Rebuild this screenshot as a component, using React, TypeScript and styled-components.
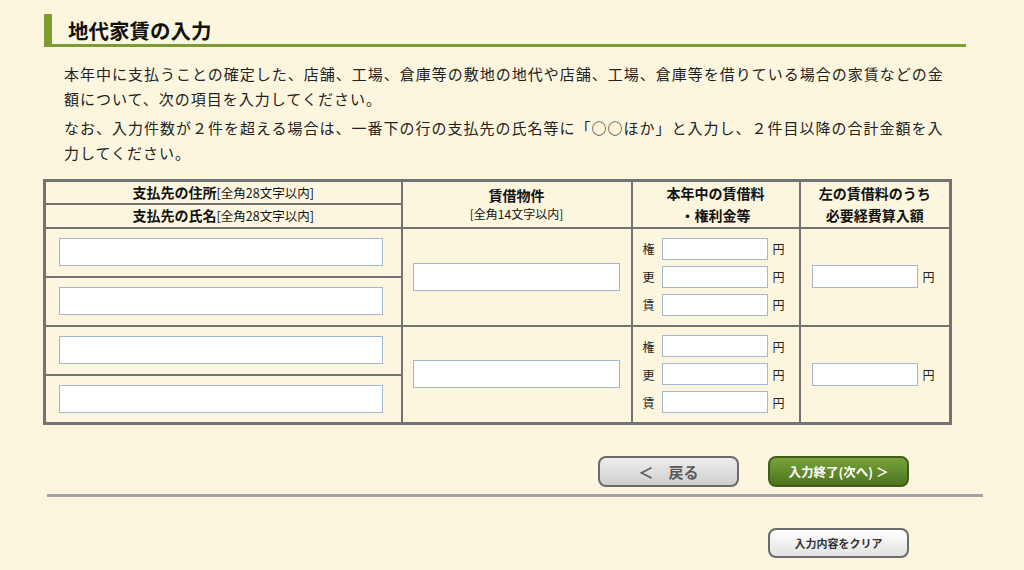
import styled, { createGlobalStyle } from "styled-components";

const GlobalStyle = createGlobalStyle`
  html, body {
    margin: 0;
    padding: 0;
    background: #fdf6df;
  }
  body {
    font-family: "Noto Sans CJK JP", "Noto Sans", sans-serif;
    color: #222;
  }
`;

const entries = [0, 1];
const kinds = ["権", "更", "賃"];

const App = function App(): JSX.Element {
  return (
    <>
      <GlobalStyle />
      <Page>
        <Heading>地代家賃の入力</Heading>
        <Lead>
          <p>
            本年中に支払うことの確定した、店舗、工場、倉庫等の敷地の地代や店舗、工場、倉庫等を借りている場合の家賃などの金額について、次の項目を入力してください。
          </p>
          <p>
            なお、入力件数が２件を超える場合は、一番下の行の支払先の氏名等に「○○ほか」と入力し、２件目以降の合計金額を入力してください。
          </p>
        </Lead>
        <Table>
          <colgroup>
            <col style={{ width: 357 }} />
            <col style={{ width: 230 }} />
            <col style={{ width: 168 }} />
            <col style={{ width: 151 }} />
          </colgroup>
          <thead>
            <HeadRow $h={23}>
              <Th>
                支払先の住所<Note>[全角28文字以内]</Note>
              </Th>
              <Th rowSpan={2}>
                賃借物件
                <SubNote>[全角14文字以内]</SubNote>
              </Th>
              <Th rowSpan={2} $tall>
                本年中の賃借料
                <br />
                ・権利金等
              </Th>
              <Th rowSpan={2} $tall>
                左の賃借料のうち
                <br />
                必要経費算入額
              </Th>
            </HeadRow>
            <HeadRow $h={24}>
              <Th>
                支払先の氏名<Note>[全角28文字以内]</Note>
              </Th>
            </HeadRow>
          </thead>
          <tbody>
            {entries.map((i) => [
              <BodyRow key={`a${i}`}>
                <Td>
                  <NameInput type="text" />
                </Td>
                <Td rowSpan={2} $center>
                  <PropertyInput type="text" />
                </Td>
                <Td rowSpan={2}>
                  <AmountList>
                    {kinds.map((k) => (
                      <AmountLine key={k}>
                        <Kind>{k}</Kind>
                        <SmallInput type="text" />
                        <Yen>円</Yen>
                      </AmountLine>
                    ))}
                  </AmountList>
                </Td>
                <Td rowSpan={2}>
                  <ExpenseLine>
                    <SmallInput type="text" />
                    <Yen>円</Yen>
                  </ExpenseLine>
                </Td>
              </BodyRow>,
              <BodyRow key={`b${i}`}>
                <Td>
                  <NameInput type="text" />
                </Td>
              </BodyRow>,
            ])}
          </tbody>
        </Table>
        <ButtonRow>
          <BackButton type="button">＜　戻る</BackButton>
          <NextButton type="button">入力終了(次へ) ＞</NextButton>
        </ButtonRow>
        <Divider />
        <ClearRow>
          <ClearButton type="button">入力内容をクリア</ClearButton>
        </ClearRow>
      </Page>
    </>
  );
};

const Page = styled.div`
  width: 1024px;
  height: 570px;
  padding: 14px 0 0 44px;
  box-sizing: border-box;
  overflow: hidden;
`;

const Heading = styled.h1`
  margin: 0;
  width: 922px;
  height: 33px;
  box-sizing: border-box;
  border-left: 8px solid #7d9c33;
  border-bottom: 3px solid #7d9c33;
  padding-left: 16px;
  font-size: 20.5px;
  font-weight: bold;
  line-height: 32px;
  color: #111;
`;

const Lead = styled.div`
  width: 890px;
  margin: 14px 0 0 20px;
  font-size: 15px;
  letter-spacing: 1px;
  line-height: 25px;
  color: #222;

  p {
    margin: 0 0 4px;
  }
`;

const Table = styled.table`
  margin: 14px 0 0 -1px;
  width: 907px;
  table-layout: fixed;
  border-collapse: collapse;
  border: 3px solid #737373;
`;

const HeadRow = styled.tr<{ $h: number }>`
  height: ${(p) => p.$h}px;
`;

const Th = styled.th<{ $tall?: boolean }>`
  border: 2px solid #737373;
  padding: 0;
  font-size: 14px;
  font-weight: bold;
  line-height: ${(p) => (p.$tall ? 22 : 18)}px;
  text-align: center;
  vertical-align: middle;
  color: #111;
`;

const Note = styled.span`
  font-size: 12.5px;
  font-weight: normal;
`;

const SubNote = styled.span`
  display: block;
  font-size: 12px;
  font-weight: normal;
  line-height: 18px;
  margin-top: 1px;
`;

const BodyRow = styled.tr`
  height: 49px;
`;

const Td = styled.td<{ $center?: boolean }>`
  border: 2px solid #737373;
  padding: 0 10px;
  vertical-align: middle;
  text-align: ${(p) => (p.$center ? "center" : "left")};
`;

const BaseInput = styled.input`
  box-sizing: border-box;
  border: 1px solid #a3b6d8;
  background: #fff;
  border-radius: 0;
  padding: 0 4px;
  margin: 0;
  font-size: 13px;
  outline: none;
`;

const NameInput = styled(BaseInput)`
  display: block;
  width: 324px;
  height: 28px;
  margin-left: 3px;
`;

const PropertyInput = styled(BaseInput)`
  display: block;
  width: 207px;
  height: 28px;
`;

const SmallInput = styled(BaseInput)`
  width: 106px;
  height: 22px;
`;

const AmountList = styled.div`
  display: flex;
  flex-direction: column;
  gap: 6px;
`;

const AmountLine = styled.div`
  display: flex;
  align-items: center;
`;

const Kind = styled.span`
  width: 19px;
  font-size: 12px;
  color: #222;
`;

const Yen = styled.span`
  margin-left: 5px;
  font-size: 12px;
  color: #222;
`;

const ExpenseLine = styled.div`
  display: flex;
  align-items: center;
  padding-left: 1px;

  ${SmallInput} {
    height: 23px;
  }
`;

const ButtonRow = styled.div`
  display: flex;
  justify-content: flex-end;
  gap: 29px;
  width: 865px;
  margin-top: 31px;
`;

const ButtonBase = styled.button`
  width: 141px;
  height: 31px;
  border-radius: 8px;
  font-family: "Noto Sans CJK JP", sans-serif;
  font-weight: bold;
  cursor: pointer;
  padding: 0;
`;

const BackButton = styled(ButtonBase)`
  border: 2px solid #6a6a6a;
  background: linear-gradient(#ededed, #cfcfcf);
  color: #5a5a5a;
  font-size: 15px;
`;

const NextButton = styled(ButtonBase)`
  border: 2px solid #3f5f17;
  background: linear-gradient(#78a23a, #4d7520);
  color: #fff;
  font-size: 12.5px;
`;

const Divider = styled.div`
  width: 936px;
  height: 3px;
  margin: 7px 0 0 3px;
  background: #a3a3a3;
`;

const ClearRow = styled.div`
  display: flex;
  justify-content: flex-end;
  width: 865px;
  margin-top: 31px;
`;

const ClearButton = styled(ButtonBase)`
  height: 30px;
  border: 2px solid #6a6a6a;
  background: linear-gradient(#ffffff, #e2e2e2);
  color: #333;
  font-size: 11px;
`;

export default App;
